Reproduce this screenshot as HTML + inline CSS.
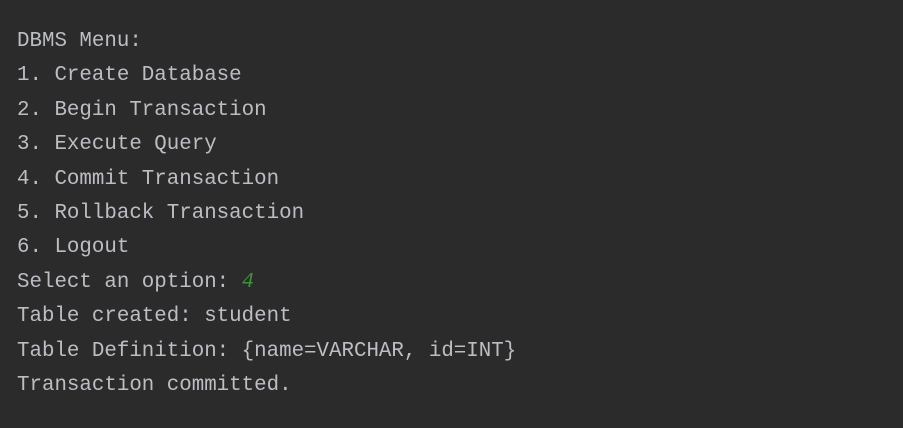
<!DOCTYPE html>
<html><head><style>
html,body{margin:0;padding:0;}
body{width:903px;height:428px;background:#2b2b2b;overflow:hidden;}
pre{margin:0;position:absolute;left:17px;top:25px;font-family:"Liberation Mono",monospace;font-size:20.8px;line-height:34.4px;color:#bcbec4;}
.g{color:#3f8f3f;font-style:italic;}
</style></head><body>
<pre>DBMS Menu:
1. Create Database
2. Begin Transaction
3. Execute Query
4. Commit Transaction
5. Rollback Transaction
6. Logout
Select an option: <span class="g">4</span>
Table created: student
Table Definition: {name=VARCHAR, id=INT}
Transaction committed.</pre>
</body></html>
